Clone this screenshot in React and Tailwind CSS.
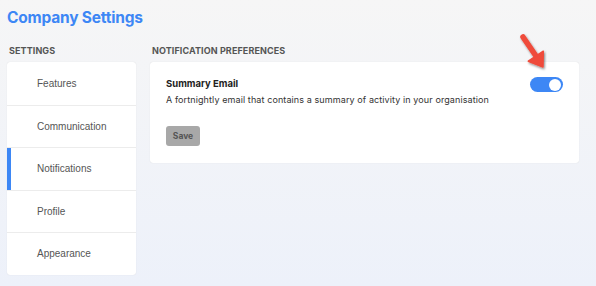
import { useState } from 'react';

const items = ['Features', 'Communication', 'Notifications', 'Profile', 'Appearance'];

export default function App() {
  const [active, setActive] = useState('Notifications');
  const [enabled, setEnabled] = useState(true);

  return (
    <div className="min-h-[286px] w-[596px] bg-gradient-to-b from-[#f6f6f6] to-[#edf1fa] px-[7px] pt-[8px] font-['Inter',sans-serif]">
      {/* Title */}
      <h1 className="text-[15.5px] font-bold leading-[20px] tracking-[-0.2px] text-[#3d87f5]">Company Settings</h1>

      <div className="mt-[17px] flex gap-[14px]">
        {/* Sidebar */}
        <div className="w-[129px]">
          <div className="pl-[2px] text-[9px] font-bold uppercase leading-[12px] tracking-[0.1px] text-[#555]">Settings</div>
          <div className="mt-[5px] overflow-hidden rounded-[3px] bg-white shadow-[0_0_1px_rgba(0,0,0,0.15)]">
            {items.map((item, i) => (
              <button
                key={item}
                onClick={() => setActive(item)}
                className={`relative flex h-[42.5px] w-full items-center pl-[30px] text-left font-['Liberation_Sans',sans-serif] text-[10px] text-[#555] ${i > 0 ? 'border-t border-[#ececec]' : ''}`}
              >
                {active === item && <span className="absolute left-0 top-0 h-full w-[4px] bg-[#3d87f5]" />}
                {item}
              </button>
            ))}
          </div>
        </div>

        {/* Main */}
        <div className="w-[429px]">
          <div className="pl-[2px] text-[9px] font-bold uppercase leading-[12px] tracking-[0.1px] text-[#555]">Notification Preferences</div>
          <div className="relative mt-[5px] rounded-[3px] bg-white px-[16px] pb-[17px] pt-[15px] shadow-[0_0_1px_rgba(0,0,0,0.15)]">
            <div className="flex items-start justify-between">
              <div>
                <div className="text-[9.5px] font-bold leading-[13px] text-[#222]">Summary Email</div>
                <div className="mt-[4px] text-[9px] leading-[12px] tracking-[0.1px] text-[#333]">
                  A fortnightly email that contains a summary of activity in your organisation
                </div>
              </div>
              <button
                onClick={() => setEnabled(!enabled)}
                className={`flex h-[15px] w-[33px] items-center rounded-full p-[2px] ${enabled ? 'justify-end bg-[#3d87f5]' : 'justify-start bg-gray-300'}`}
              >
                <span className="h-[12px] w-[12px] rounded-full bg-white" />
              </button>
            </div>
            <button className="mt-[20px] h-[20px] w-[34px] rounded-[3px] bg-[#a8a8a8] text-[8.5px] font-bold leading-[10px] text-[#555]">
              Save
            </button>

            {/* Annotation arrow */}
            <svg className="absolute left-[365px] top-[-33px]" width="40" height="45" viewBox="0 0 40 45">
              <defs>
                <filter id="sh" x="-50%" y="-50%" width="200%" height="200%">
                  <feDropShadow dx="1" dy="1.5" stdDeviation="1.2" floodColor="#000" floodOpacity="0.45" />
                </filter>
              </defs>
              <g filter="url(#sh)">
                <path d="M8 8 L21 27" stroke="#ef4b3b" strokeWidth="5.5" strokeLinecap="round" fill="none" />
                <path d="M28.3 22.2 L28 38 L13.3 32.2 Z" fill="#ef4b3b" stroke="#ef4b3b" strokeWidth="1.5" strokeLinejoin="round" />
              </g>
            </svg>
          </div>
        </div>
      </div>
    </div>
  );
}
